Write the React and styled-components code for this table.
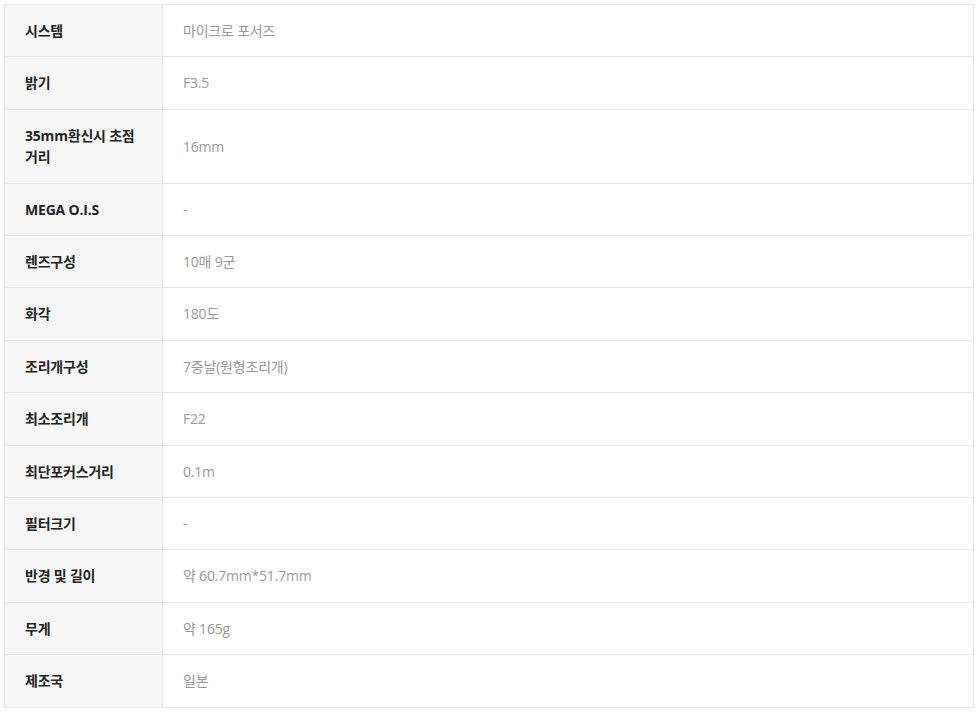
import React from 'react'
import styled, { createGlobalStyle } from 'styled-components'

const specs = [
    ['시스템', '마이크로 포서즈'],
    ['밝기', 'F3.5'],
    ['35mm환신시 초점 거리', '16mm'],
    ['MEGA O.I.S', '-'],
    ['렌즈구성', '10매 9군'],
    ['화각', '180도'],
    ['조리개구성', '7중날(원형조리개)'],
    ['최소조리개', 'F22'],
    ['최단포커스거리', '0.1m'],
    ['필터크기', '-'],
    ['반경 및 길이', '약 60.7mm*51.7mm'],
    ['무게', '약 165g'],
    ['제조국', '일본'],
]

function App() {
    return (
        <>
            <GlobalStyle />
            <Wrap>
                <SpecTable>
                    <colgroup>
                        <col style={{ width: 158 }} />
                        <col />
                    </colgroup>
                    <tbody>
                        {specs.map(([label, value]) => (
                            <tr key={label}>
                                <Label>{label}</Label>
                                <Value>{value}</Value>
                            </tr>
                        ))}
                    </tbody>
                </SpecTable>
            </Wrap>
        </>
    )
}

export default App

const GlobalStyle = createGlobalStyle`
body{
    margin:0;
    background:#fff;
    font-family: "Open Sans", "Noto Sans CJK KR", sans-serif;
}
`
const Wrap = styled.div`
padding:4px;
`
const SpecTable = styled.table`
width:100%;
border-collapse: collapse;
table-layout: fixed;
font-size:14px;
line-height:21.4px;
letter-spacing:-0.2px;
td, th{
    border:1px solid #e6e6e6;
    padding:15px 20px;
    vertical-align: middle;
    text-align:left;
}
`
const Label = styled.th`
background-color:#f7f7f7;
color:#222;
font-weight:700;
padding-right:16px !important;
word-break: keep-all;
`
const Value = styled.td`
color:#999;
font-weight:400;
`
